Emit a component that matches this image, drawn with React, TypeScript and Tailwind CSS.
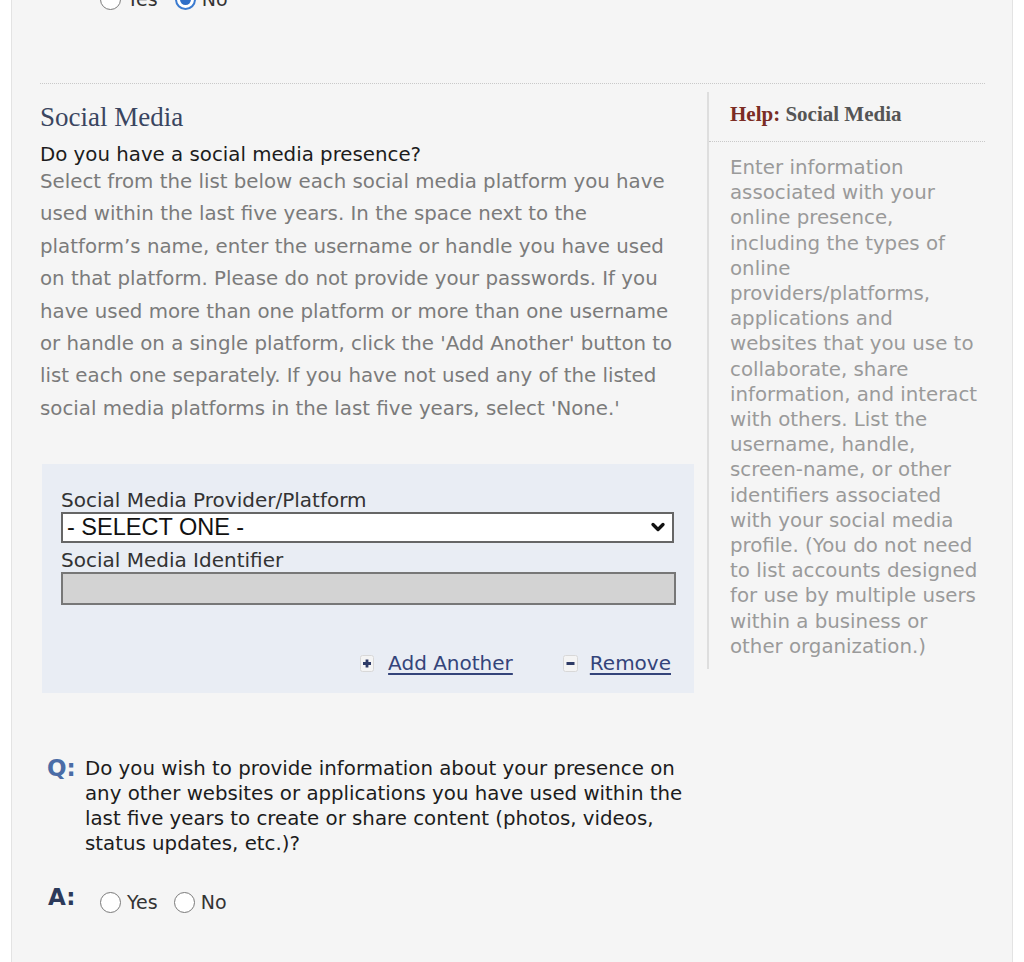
import React, { useState } from 'react';
import { ChevronDown } from 'lucide-react';

const Radio: React.FC<{ checked: boolean; label: string; onClick: () => void }> = ({ checked, label, onClick }) => (
  <label className="flex cursor-pointer items-center gap-[6px]" onClick={onClick}>
    <span
      className={`flex h-[21px] w-[21px] items-center justify-center rounded-full bg-white ${
        checked ? 'border-2 border-[#3b7bd0]' : 'border border-[#7a7a7a]'
      }`}
    >
      {checked && <span className="h-[11px] w-[11px] rounded-full bg-[#2f6fc8]" />}
    </span>
    <span>{label}</span>
  </label>
);

const PlusIcon = () => (
  <svg width="14" height="17" viewBox="0 0 14 17">
    <rect x="0.5" y="0.5" width="13" height="16" rx="2" fill="#f4f4f4" stroke="#d8d8d8" />
    <path d="M7 4.5v8M3 8.5h8" stroke="#2e3b66" strokeWidth="2.8" />
  </svg>
);

const MinusIcon = () => (
  <svg width="15" height="17" viewBox="0 0 15 17">
    <rect x="0.5" y="0.5" width="14" height="16" rx="2" fill="#f4f4f4" stroke="#d8d8d8" />
    <path d="M3.5 8.5h8" stroke="#2e3b66" strokeWidth="3" />
  </svg>
);

const App: React.FC = () => {
  const [prevAnswer, setPrevAnswer] = useState<'yes' | 'no'>('no');
  const [otherSites, setOtherSites] = useState<'yes' | 'no' | ''>('');
  const [platform, setPlatform] = useState('');

  return (
    <div className="min-h-[962px] bg-white font-['DejaVu_Sans',sans-serif]">
      <div className="ml-[11px] h-[962px] w-[1002px] overflow-hidden border-x border-[#e3e3e3] bg-[#f5f5f5]">
        {/* previous question's answer, cut off by the scroll */}
        <div className="-mt-[12px] flex items-center gap-[17px] pl-[88px] text-[19px] leading-[22px] text-[#333]">
          <Radio checked={prevAnswer === 'yes'} label="Yes" onClick={() => setPrevAnswer('yes')} />
          <Radio checked={prevAnswer === 'no'} label="No" onClick={() => setPrevAnswer('no')} />
        </div>

        <div className="ml-[28px] mt-[73px] w-[945px] border-t border-dotted border-[#c9c9c9]" />

        <div className="ml-[28px] mt-[8px] flex items-start gap-[12px]">
          {/* main column */}
          <div className="w-[655px]">
            <h2 className="mt-[9px] font-['Liberation_Serif',serif] text-[27px] leading-[32px] text-[#3a4560]">
              Social Media
            </h2>
            <p className="mt-[10px] text-[19.8px] leading-[24px] text-[#1c1c1c]">Do you have a social media presence?</p>
            <p className="mt-[-1px] w-[645px] text-[19.8px] leading-[32.4px] text-[#7b7b7b]">
              Select from the list below each social media platform you have used within the last five years. In the space
              next to the platform’s name, enter the username or handle you have used on that platform. Please do not provide
              your passwords. If you have used more than one platform or more than one username or handle on a single
              platform, click the 'Add Another' button to list each one separately. If you have not used any of the listed
              social media platforms in the last five years, select 'None.'
            </p>

            <div className="ml-[2px] mt-[39px] w-[652px] bg-[#e9edf4] pb-[18px] pl-[19px] pr-[23px] pt-[24px] text-[20px] text-[#333]">
              <div className="leading-[24px]">Social Media Provider/Platform</div>
              <div className="relative w-[613px]">
                <select
                  value={platform}
                  onChange={e => setPlatform(e.target.value)}
                  className="h-[31px] w-full appearance-none border-2 border-[#666] bg-white pl-[4px] font-['Liberation_Sans',sans-serif] text-[23.5px] leading-[27px] text-[#111] outline-none"
                >
                  <option value="">- SELECT ONE -</option>
                  <option value="facebook">FACEBOOK</option>
                  <option value="instagram">INSTAGRAM</option>
                  <option value="twitter">TWITTER</option>
                  <option value="youtube">YOUTUBE</option>
                  <option value="none">NONE</option>
                </select>
                <ChevronDown
                  size={20}
                  strokeWidth={4}
                  className="pointer-events-none absolute right-[6px] top-[5px] text-[#111]"
                />
              </div>
              <div className="mt-[6px] leading-[23px]">Social Media Identifier</div>
              <input
                disabled
                className="block h-[33px] w-[615px] border-2 border-[#777] bg-[#d3d3d3]"
              />
              <div className="mt-[46px] flex items-center justify-end gap-[50px] leading-[24px] text-[#34447a]">
                <a href="#" className="flex items-center gap-[14px]" onClick={e => e.preventDefault()}>
                  <PlusIcon />
                  <span className="underline underline-offset-[3px]">Add Another</span>
                </a>
                <a href="#" className="flex items-center gap-[12px]" onClick={e => e.preventDefault()}>
                  <MinusIcon />
                  <span className="underline underline-offset-[3px]">Remove</span>
                </a>
              </div>
            </div>

            <div className="mt-[63px] flex items-start">
              <span className="ml-[7px] w-[38px] text-[23px] font-bold leading-[25px] text-[#4a6ca6]">Q:</span>
              <p className="w-[605px] text-[19.8px] leading-[25px] text-[#1c1c1c]">
                Do you wish to provide information about your presence on any other websites or applications you have used
                within the last five years to create or share content (photos, videos, status updates, etc.)?
              </p>
            </div>

            <div className="mt-[34px] flex items-center">
              <span className="-mt-[10px] ml-[8px] w-[52px] text-[23px] font-bold leading-[25px] text-[#2c3a5a]">A:</span>
              <div className="flex items-center gap-[16px] text-[19px] leading-[24px] text-[#333]">
                <Radio checked={otherSites === 'yes'} label="Yes" onClick={() => setOtherSites('yes')} />
                <Radio checked={otherSites === 'no'} label="No" onClick={() => setOtherSites('no')} />
              </div>
            </div>
          </div>

          {/* help column */}
          <div className="w-[278px] border-l-2 border-[#dedede] pb-[10px] pt-[10px]">
            <div className="pl-[21px] font-['Liberation_Serif',serif] text-[21px] font-bold leading-[24px]">
              <span className="text-[#7b2c24]">Help:</span> <span className="text-[#555]">Social Media</span>
            </div>
            <div className="mt-[15px] border-t border-dotted border-[#c9c9c9]" />
            <p className="mt-[13px] w-[273px] pl-[21px] text-[19.8px] leading-[25.2px] text-[#9a9a9a]">
              Enter information associated with your online presence, including the types of online providers/platforms,
              applications and websites that you use to collaborate, share information, and interact with others. List the
              username, handle, screen-name, or other identifiers associated with your social media profile. (You do not need
              to list accounts designed for use by multiple users within a business or other organization.)
            </p>
          </div>
        </div>
      </div>
    </div>
  );
};

export default App;
